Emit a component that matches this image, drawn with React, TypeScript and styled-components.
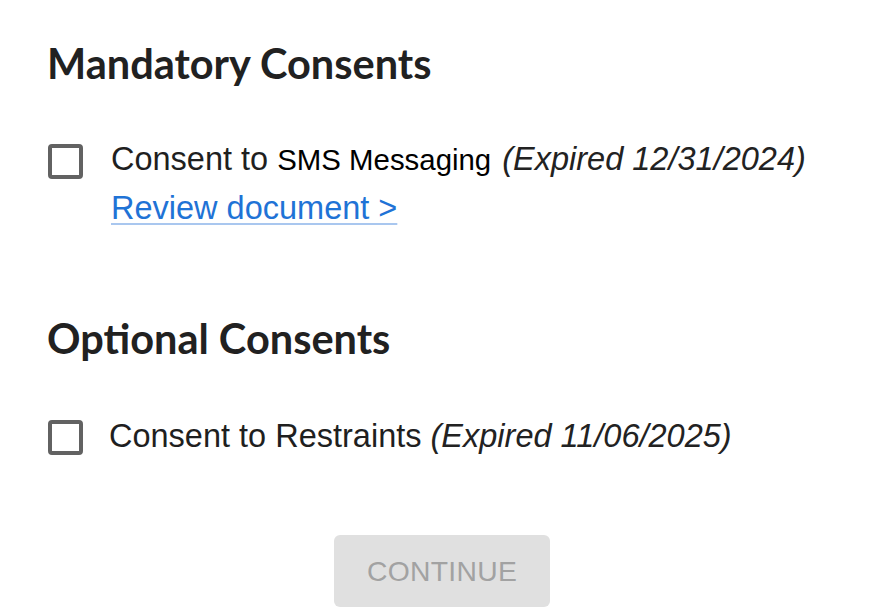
import React from "react";
import styled, { createGlobalStyle } from "styled-components";

const GlobalStyle = createGlobalStyle`
  html, body {
    margin: 0;
    padding: 0;
    background: #ffffff;
  }
  body {
    font-family: "Liberation Sans", Arial, sans-serif;
    color: #1f1f1f;
  }
`;

const Page = styled.main`
  display: flex;
  flex-direction: column;
  padding: 39px 0 0 47px;
  width: 880px;
  box-sizing: border-box;
`;

const SectionTitle = styled.h2<{ $top: number }>`
  margin: ${(p) => p.$top}px 0 0 0;
  font-family: Lato, "Open Sans", sans-serif;
  font-weight: 700;
  font-size: 41.5px;
  line-height: 48px;
  color: #212121;
`;

const Row = styled.div<{ $top: number; $boxOffset: number; $gap: number }>`
  display: flex;
  align-items: flex-start;
  gap: ${(p) => p.$gap}px;
  margin-top: ${(p) => p.$top}px;
  --box-offset: ${(p) => p.$boxOffset}px;
`;

const Box = styled.span`
  flex: none;
  width: 35px;
  height: 35px;
  box-sizing: border-box;
  border: 4px solid #626262;
  border-radius: 4px;
  margin-top: var(--box-offset);
  margin-left: 1px;
`;

const Body = styled.div`
  display: flex;
  flex-direction: column;
  font-size: 32.5px;
  line-height: 48px;
`;

const Label = styled.span`
  color: #1f1f1f;
  white-space: nowrap;
`;

const Strong = styled.span`
  color: #000;
  font-size: 29.4px;
  margin-right: 2px;
`;

const Expiry = styled.em`
  font-style: italic;
  color: #222;
`;

const DocLink = styled.a`
  color: #1f73d6;
  text-decoration: underline;
  text-decoration-color: #a9c7ef;
  text-decoration-thickness: 2px;
  text-underline-offset: 4px;
  cursor: pointer;
  width: fit-content;
`;

const Actions = styled.div`
  display: flex;
  justify-content: center;
  margin: 75px 0 0 -47px;
  padding-left: 4px;
`;

const ContinueButton = styled.button`
  width: 216px;
  height: 72px;
  border: none;
  border-radius: 6px;
  background: #e0e0e0;
  color: #a2a2a2;
  font-family: "Liberation Sans", Arial, sans-serif;
  font-size: 28.3px;
  letter-spacing: 0.3px;
  cursor: not-allowed;
`;

export default function App() {
  return (
    <>
      <GlobalStyle />
      <Page>
        <SectionTitle $top={0}>Mandatory Consents</SectionTitle>
        <Row $top={48} $boxOffset={9} $gap={28}>
          <Box role="checkbox" aria-checked="false" />
          <Body>
            <Label>
              Consent to <Strong>SMS Messaging</Strong>{" "}
              <Expiry>(Expired 12/31/2024)</Expiry>
            </Label>
            <DocLink>Review document &gt;</DocLink>
          </Body>
        </Row>
        <SectionTitle $top={82}>Optional Consents</SectionTitle>
        <Row $top={50} $boxOffset={8} $gap={26}>
          <Box role="checkbox" aria-checked="false" />
          <Body>
            <Label>
              Consent to Restraints <Expiry>(Expired 11/06/2025)</Expiry>
            </Label>
          </Body>
        </Row>
        <Actions>
          <ContinueButton disabled>CONTINUE</ContinueButton>
        </Actions>
      </Page>
    </>
  );
}
